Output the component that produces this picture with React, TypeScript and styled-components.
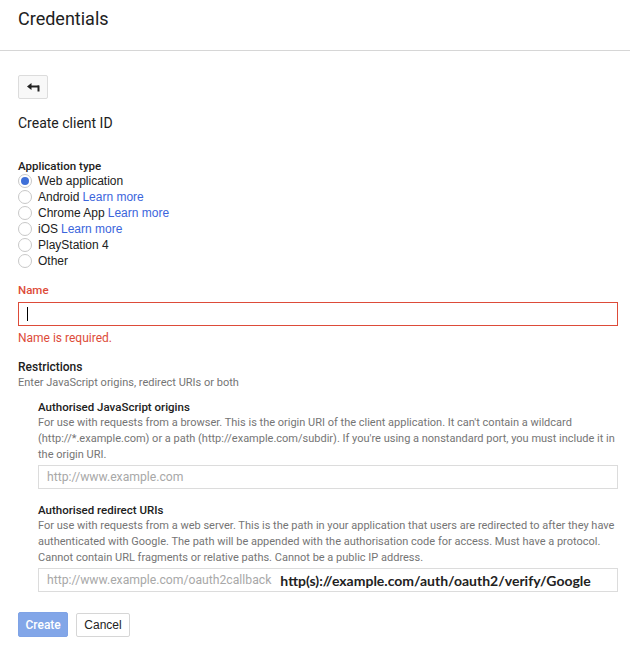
import React from "react";
import styled, { createGlobalStyle } from "styled-components";

const Global = createGlobalStyle`
  html, body { margin: 0; padding: 0; background: #fff; }
  body { font-family: Roboto, "Liberation Sans", Arial, sans-serif; color: #212121; }
  * { box-sizing: border-box; }
`;

const Page = styled.div`
  width: 630px;
  height: 646px;
  overflow: hidden;
`;

const Header = styled.header`
  height: 51px;
  border-bottom: 1px solid #d6d6d6;
  padding-left: 18px;
`;

const Title = styled.h1`
  margin: 0;
  font-size: 18px;
  font-weight: 400;
  line-height: 38px;
  color: #212121;
`;

const Body = styled.main`
  padding: 24px 12px 0 18px;
  display: flex;
  flex-direction: column;
`;

const BackButton = styled.button`
  width: 30px;
  height: 24px;
  border: 1px solid #dcdcdc;
  border-radius: 2px;
  background: #f8f8f8;
  display: flex;
  align-items: center;
  justify-content: center;
  padding: 0;
`;

const PageSubtitle = styled.h2`
  margin: 14px 0 0;
  font-size: 14px;
  font-weight: 400;
  line-height: 20px;
  color: #212121;
`;

const Label = styled.div<{ $error?: boolean; $size?: number }>`
  font-size: ${(p) => p.$size ?? 11.5}px;
  font-weight: 500;
  line-height: 16px;
  color: ${(p) => (p.$error ? "#dd4b39" : "#212121")};
`;

const Fieldset = styled.div<{ $mt: number }>`
  margin-top: ${(p) => p.$mt}px;
  display: flex;
  flex-direction: column;
`;

const RadioList = styled.div`
  margin-top: -1px;
  display: flex;
  flex-direction: column;
`;

const RadioRow = styled.label`
  display: flex;
  align-items: center;
  height: 16px;
  font-size: 12px;
  color: #212121;
  font-family: "Liberation Sans", Arial, sans-serif;
`;

const RadioCircle = styled.span<{ $checked?: boolean }>`
  width: 14px;
  height: 14px;
  border-radius: 50%;
  border: 1px solid #c8c8c8;
  background: #fff;
  margin-right: 6px;
  display: flex;
  align-items: center;
  justify-content: center;
  &::after {
    content: "";
    width: 8px;
    height: 8px;
    border-radius: 50%;
    background: ${(p) => (p.$checked ? "#3e6fd8" : "transparent")};
  }
`;

const Link = styled.a`
  color: #3b65dc;
  text-decoration: none;
  margin-left: 3px;
`;

const TextField = styled.div<{ $error?: boolean }>`
  height: 24px;
  border: 1px solid ${(p) => (p.$error ? "#dd4b39" : "#dcdcdc")};
  display: flex;
  align-items: center;
  padding-left: 8px;
  background: #fff;
  white-space: nowrap;
`;

const Caret = styled.span`
  width: 1px;
  height: 14px;
  background: #000;
`;

const Placeholder = styled.span`
  color: #a8a8a8;
  font-size: 12.2px;
`;

const Annotation = styled.span`
  margin-left: 9px;
  font-family: Lato, "Open Sans", sans-serif;
  font-weight: 700;
  font-size: 14px;
  color: #222;
`;

const ErrorText = styled.div`
  margin-top: 4px;
  font-size: 12px;
  line-height: 16px;
  color: #dd4b39;
`;

const Hint = styled.div`
  font-size: 11px;
  line-height: 16px;
  color: #757575;
`;

const SubSection = styled.div<{ $mt: number }>`
  margin-top: ${(p) => p.$mt}px;
  padding-left: 20px;
  display: flex;
  flex-direction: column;
`;

const Description = styled.p`
  margin: 0 0 2px;
  font-size: 11px;
  line-height: 16px;
  color: #757575;
`;

const Actions = styled.div`
  margin-top: 20px;
  display: flex;
  gap: 8px;
  align-items: center;
`;

const Button = styled.button<{ $primary?: boolean }>`
  height: ${(p) => (p.$primary ? 25 : 24)}px;
  padding: 0 ${(p) => (p.$primary ? 6.5 : 7)}px;
  border-radius: 2px;
  font-family: ${(p) => (p.$primary ? "Roboto, sans-serif" : '"Liberation Sans", Arial, sans-serif')};
  font-size: 12px;
  font-weight: ${(p) => (p.$primary ? 500 : 400)};
  border: 1px solid ${(p) => (p.$primary ? "#7fa3e6" : "#d6d6d6")};
  background: ${(p) => (p.$primary ? "#82a6e8" : "#fff")};
  color: ${(p) => (p.$primary ? "#fff" : "#222")};
`;

const BackIcon = () => (
  <svg width="13" height="9" viewBox="0 0 13 9">
    <path d="M0 3.5 L4.5 0 L4.5 7 Z" fill="#222" />
    <rect x="4" y="2.5" width="8" height="2" fill="#222" />
    <rect x="10.5" y="2.5" width="2" height="6" fill="#222" />
  </svg>
);

const types: { label: string; learn?: boolean; checked?: boolean }[] = [
  { label: "Web application", checked: true },
  { label: "Android", learn: true },
  { label: "Chrome App", learn: true },
  { label: "iOS", learn: true },
  { label: "PlayStation 4" },
  { label: "Other" },
];

export default function App() {
  return (
    <Page>
      <Global />
      <Header>
        <Title>Credentials</Title>
      </Header>
      <Body>
        <div>
          <BackButton aria-label="Back">
            <BackIcon />
          </BackButton>
        </div>
        <PageSubtitle>Create client ID</PageSubtitle>

        <Fieldset $mt={25}>
          <Label>Application type</Label>
          <RadioList>
            {types.map((t) => (
              <RadioRow key={t.label}>
                <RadioCircle $checked={t.checked} />
                {t.label}
                {t.learn && <Link href="#">Learn more</Link>}
              </RadioRow>
            ))}
          </RadioList>
        </Fieldset>

        <Fieldset $mt={13}>
          <Label $error>Name</Label>
          <TextField $error style={{ marginTop: 4 }}>
            <Caret />
          </TextField>
          <ErrorText>Name is required.</ErrorText>
        </Fieldset>

        <Fieldset $mt={13}>
          <Label $size={12}>Restrictions</Label>
          <Hint>Enter JavaScript origins, redirect URIs or both</Hint>
        </Fieldset>

        <SubSection $mt={8}>
          <Label>Authorised JavaScript origins</Label>
          <Description>
            For use with requests from a browser. This is the origin URI of the client application. It can't contain a
            wildcard (http://*.example.com) or a path (http://example.com/subdir). If you're using a nonstandard port,
            you must include it in the origin URI.
          </Description>
          <TextField>
            <Placeholder>http://www.example.com</Placeholder>
          </TextField>
        </SubSection>

        <SubSection $mt={13}>
          <Label>Authorised redirect URIs</Label>
          <Description>
            For use with requests from a web server. This is the path in your application that users are redirected to
            after they have authenticated with Google. The path will be appended with the authorisation code for access.
            Must have a protocol. Cannot contain URL fragments or relative paths. Cannot be a public IP address.
          </Description>
          <TextField>
            <Placeholder>http://www.example.com/oauth2callback</Placeholder>
            <Annotation>http(s)://example.com/auth/oauth2/verify/Google</Annotation>
          </TextField>
        </SubSection>

        <Actions>
          <Button $primary>Create</Button>
          <Button>Cancel</Button>
        </Actions>
      </Body>
    </Page>
  );
}
